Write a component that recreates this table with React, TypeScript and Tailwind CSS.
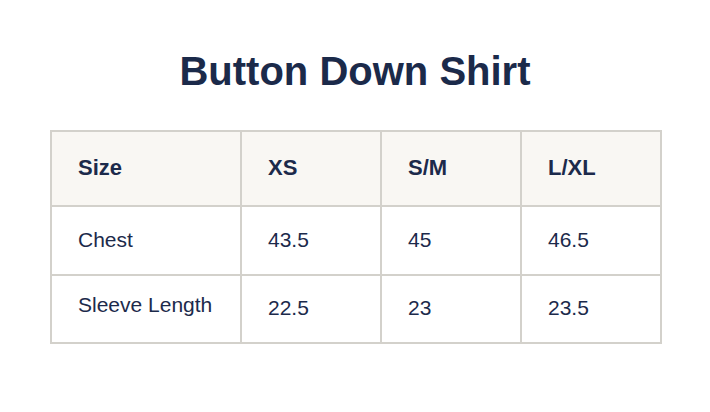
import React from "react";

const headers = ["Size", "XS", "S/M", "L/XL"];
const rows = [
  ["Chest", "43.5", "45", "46.5"],
  ["Sleeve Length", "22.5", "23", "23.5"],
];

export default function App() {
  return (
    <div
      className="w-[710px] h-[412px] bg-white text-[#1c2a4b]"
      style={{ fontFamily: '"Liberation Sans", Arial, sans-serif' }}
    >
      <div className="pt-[48px]">
        <h1 className="text-center text-[40px] leading-[46px] font-bold text-[#1b2a4a]">
          Button Down Shirt
        </h1>
      </div>
      <div className="mt-[36px] ml-[50px] w-[612px] border-2 border-[#d3d1cb] bg-[#d3d1cb] grid grid-cols-[188px_138px_138px_138px] grid-rows-[73px_67px_66px] gap-[2px]">
        {headers.map((h) => (
          <div
            key={h}
            className="bg-[#f9f7f3] flex items-center pl-[26px] pb-[2px] text-[22px] leading-[24px] font-bold"
          >
            {h}
          </div>
        ))}
        {rows.map((r, ri) =>
          r.map((c, ci) => (
            <div
              key={`${ri}-${ci}`}
              className={`bg-white flex items-center pl-[26px] text-[21px] leading-[24px] ${
                ri === 1 && ci === 0 ? "pb-[8px]" : "pb-[2px]"
              }`}
            >
              {c}
            </div>
          ))
        )}
      </div>
    </div>
  );
}
